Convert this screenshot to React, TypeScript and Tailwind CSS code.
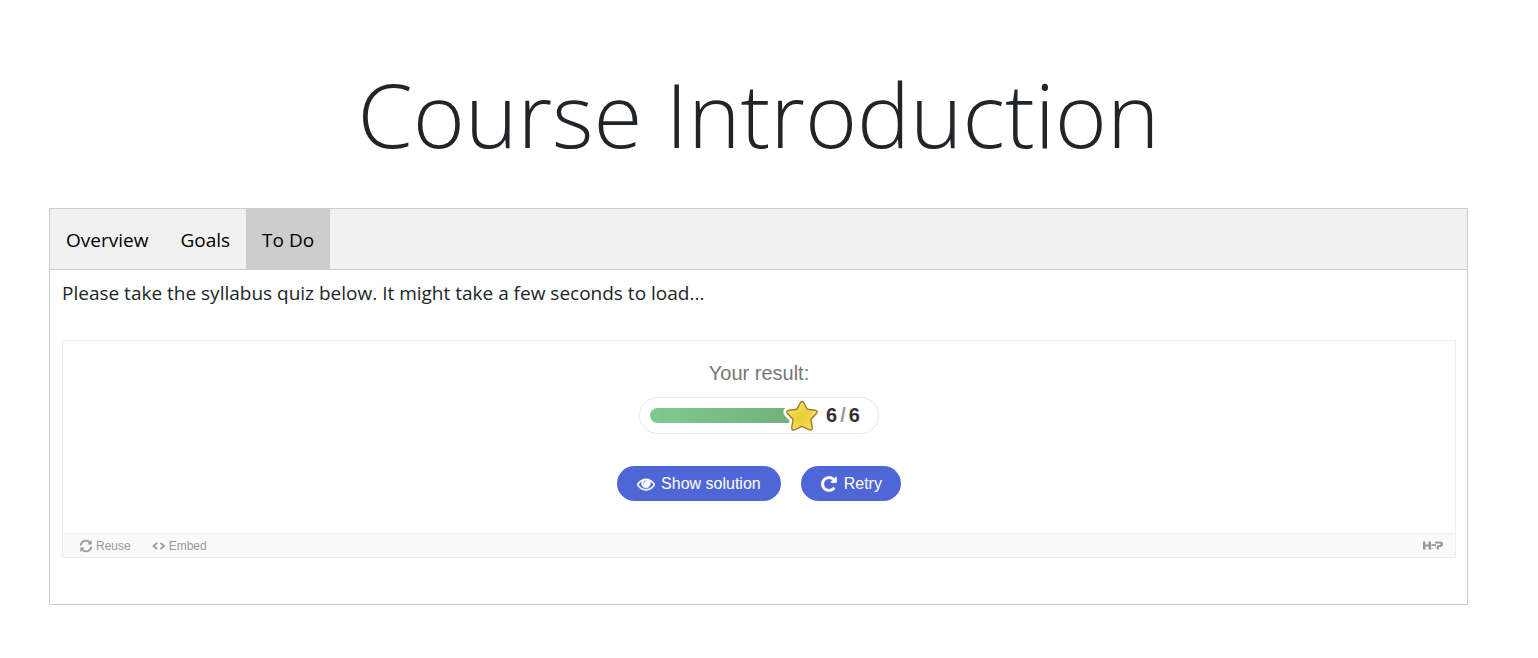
const tabs = ["Overview", "Goals", "To Do"];

function EyeIcon() {
  return (
    <svg viewBox="0 0 1792 1792" className="size-[18px]" fill="currentColor" stroke="currentColor" strokeWidth="50" aria-hidden="true">
      <path d="M1664 960q-152-236-381-353 61 104 61 225 0 185-131.5 316.5t-316.5 131.5-316.500-131.500-131.500-316.500q0-121 61-225-229 117-381 353 133 205 333.500 326.500t434.500 121.500 434.500-121.500 333.500-326.500zm-720-384q0-20-14-34t-34-14q-125 0-214.500 89.500t-89.500 214.500q0 20 14 34t34 14 34-14 14-34q0-86 61-147t147-61q20 0 34-14t14-34zm848 384q0 34-20 69-140 230-376.500 368.500t-499.500 138.500-499.500-139-376.500-368q-20-35-20-69t20-69q140-229 376.500-368t499.500-139 499.500 139 376.500 368q20 35 20 69z" />
    </svg>
  );
}

function RepeatIcon() {
  return (
    <svg viewBox="0 0 1792 1792" className="size-[18px]" fill="currentColor" stroke="currentColor" strokeWidth="40" aria-hidden="true">
      <path d="M1664 256v448q0 26-19 45t-45 19h-448q-42 0-59-40-17-39 14-69l138-138q-148-137-349-137-104 0-198.500 40.500t-163.500 109.500-109.500 163.500-40.500 198.500 40.500 198.500 109.500 163.500 163.500 109.500 198.500 40.500q119 0 225-52t179-147q7-10 23-12 15 0 25 9l137 138q9 8 9.500 20.500t-7.500 22.500q-109 132-264 204.500t-327 72.500q-156 0-298-61t-245-164-164-245-61-298 61-298 164-245 245-164 298-61q147 0 284.500 55.500t244.500 156.500l130-129q29-31 70-14 39 17 39 59z" />
    </svg>
  );
}

function ReuseIcon() {
  return (
    <svg viewBox="0 0 14 14" className="size-[14px]" fill="none" stroke="currentColor" strokeWidth="1.7" aria-hidden="true">
      <path d="M1.700 6.500A5.200 5.200 0 0 1 10.900 3.500M12.300 7.500A5.200 5.200 0 0 1 3.100 10.500" />
      <path d="M12.700 1v4.400H8.300zM1.300 13V8.600h4.400z" fill="currentColor" stroke="none" />
    </svg>
  );
}

function EmbedIcon() {
  return (
    <svg viewBox="0 0 14 14" className="size-[14px]" fill="none" stroke="currentColor" strokeWidth="1.600" aria-hidden="true">
      <path d="M5.200 4L1.400 7l3.800 3M8.400 4L12.200 7l-3.800 3" />
    </svg>
  );
}

function H5PLogo() {
  return (
    <svg viewBox="0 0 20 9" className="h-[9px] w-5" fill="currentColor" role="img" aria-label="H5P">
      <path d="M0 .5h2.500v3h3v-3h2.500v8H5.500V5.500h-3v3H0z" />
      <path d="M8.500 3.200h4.500v1.800H8.500z" />
      <path d="M7.700 6.800h2.600v1.500H7.700zM12 5.200h1.500v2.300H12z" opacity=".55" />
      <path d="M12 .5h4.800c2 0 3.200.9 3.200 2.700s-1.200 2.900-3.200 2.900H16v2.400h-2V4.200h2.400c.7 0 1.100-.3 1.100-.9 0-.5-.4-.8-1.100-.8H12z" />
    </svg>
  );
}

const starPath =
  "M20 6.500Q21.200 6.500 21.800 8L25.200 14.200L33 15.200Q36.600 16 34.400 18.600L28.900 24.400L30.300 32.400Q30.500 35.800 27.600 34.800L20 31.400L12.400 34.800Q9.500 35.800 9.700 32.400L11.100 24.400L5.600 18.600Q3.400 16 7 15.200L14.800 14.200L18.200 8Q18.800 6.500 20 6.500Z";

function Star() {
  return (
    <svg viewBox="0 0 40 40" className="absolute -top-[13px] -right-8 size-10" aria-hidden="true">
      <defs>
        <radialGradient id="star-fill" cx=".5" cy=".55" r=".6">
          <stop offset="0" stopColor="#e8cc35" />
          <stop offset=".6" stopColor="#f0d84d" />
          <stop offset="1" stopColor="#fae97c" />
        </radialGradient>
      </defs>
      <path d={starPath} fill="#fff" stroke="#fff" strokeWidth="7" strokeLinejoin="round" />
      <path d={starPath} fill="url(#star-fill)" stroke="#a17a2c" strokeWidth="1.400" strokeLinejoin="round" />
    </svg>
  );
}

export default function App() {
  return (
    <main className="bg-white pt-[60px] pr-[70px] pb-[53px] pl-[49px] font-['Open_Sans','Noto_Sans',sans-serif] text-[#212529]">
      <h1 className="mb-10 text-center text-[89px] leading-[108px] font-light">
        Course Introduction
      </h1>

      <section className="border border-[#ccc]">
        <div role="tablist" className="flex bg-[#f1f1f1]">
          {tabs.map((tab) => (
            <button
              key={tab}
              type="button"
              role="tab"
              aria-selected={tab === "To Do"}
              className="h-[60px] rounded-xs px-4 pt-[2px] text-[19px] text-black aria-selected:bg-[#ccc]"
            >
              {tab}
            </button>
          ))}
        </div>

        <div role="tabpanel" className="border-t border-[#ccc] pt-2 pr-[11px] pb-[46px] pl-3">
          <p className="mb-8 text-[19px] leading-[30px]">
            Please take the syllabus quiz below. It might take a few seconds to load...
          </p>

          <div className="border border-[#eee] font-['Liberation_Sans',Arial,sans-serif]">
            <div className="flex flex-col items-center pt-5 pb-8">
              <p className="text-[20px] leading-6 text-[#777]">Your result:</p>
              <div className="mt-3 flex h-[37px] w-[240px] items-center rounded-full border border-[#e8e8e8] pl-[10px]">
                <div className="relative h-[15px] w-[140px] rounded-l-lg bg-linear-to-r from-[#81ca8e] to-[#71b17c]">
                  <Star />
                </div>
                <p className="ml-9 pb-[2px] text-[20px] leading-6 font-bold text-[#333]">
                  6<span className="mx-[3px] text-[#999]">/</span>6
                </p>
              </div>
              <div className="mt-8 flex gap-5">
                <button type="button" className="flex h-[35px] items-center gap-[6px] rounded-full bg-[#4f67d6] px-5 text-base text-white">
                  <EyeIcon />
                  Show solution
                </button>
                <button type="button" className="flex h-[35px] items-center gap-[6px] rounded-full bg-[#4f67d6] px-[19px] text-base text-white">
                  <RepeatIcon />
                  Retry
                </button>
              </div>
            </div>
            <div className="flex h-6 items-center border-t border-[#eee] bg-[#fafafa] pr-3 pl-4 text-xs text-[#999]">
              <button type="button" className="flex items-center gap-[3px]">
                <ReuseIcon />
                Reuse
              </button>
              <button type="button" className="ml-[21px] flex items-center gap-[3px]">
                <EmbedIcon />
                Embed
              </button>
              <a href="#h5p" className="ml-auto">
                <H5PLogo />
              </a>
            </div>
          </div>
        </div>
      </section>
    </main>
  );
}
